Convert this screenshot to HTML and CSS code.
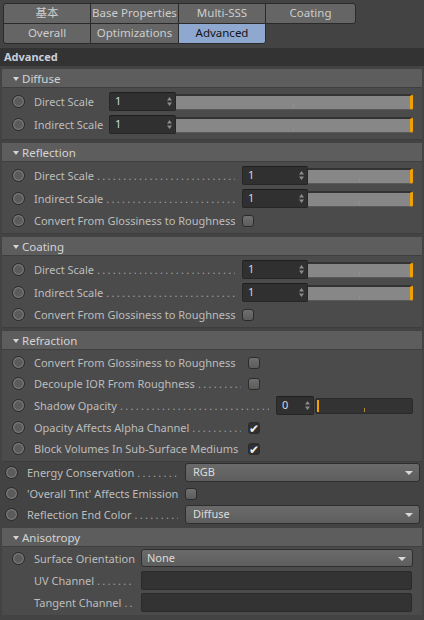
FILE: index.html
```html
<!DOCTYPE html>
<html>
<head>
<meta charset="utf-8">
<link rel="stylesheet" href="styles.css">
</head>
<body>
<div class="tabs">
  <div class="tab tl">基本</div>
  <div class="tab">Base Properties</div>
  <div class="tab">Multi-SSS</div>
  <div class="tab tr br">Coating</div>
  <div class="tab bl">Overall</div>
  <div class="tab">Optimizations</div>
  <div class="tab active br">Advanced</div>
</div>
<div class="title">Advanced</div>

<div class="group first">
  <div class="ghead"><span class="tri"></span>Diffuse</div>
  <div class="gbody">
    <div class="row"><span class="radio"></span><span class="label w75"><span>Direct Scale</span></span>
      <div class="num w67">1<svg class="spin" width="5" height="9" viewBox="0 0 5 9"><path d="M0 3.5L2.5 0L5 3.5Z M0 5.5L2.5 9L5 5.5Z" fill="#8c8c8c"/></svg></div><div class="slider"><i class="tick"></i></div></div>
    <div class="row"><span class="radio"></span><span class="label w75"><span>Indirect Scale</span></span>
      <div class="num w67">1<svg class="spin" width="5" height="9" viewBox="0 0 5 9"><path d="M0 3.5L2.5 0L5 3.5Z M0 5.5L2.5 9L5 5.5Z" fill="#8c8c8c"/></svg></div><div class="slider"><i class="tick"></i></div></div>
  </div>
</div>

<div class="group">
  <div class="ghead"><span class="tri"></span>Reflection</div>
  <div class="gbody">
    <div class="row"><span class="radio"></span><span class="label w208"><span>Direct Scale</span><span class="dots">........................................</span></span>
      <div class="num w66">1<svg class="spin" width="5" height="9" viewBox="0 0 5 9"><path d="M0 3.5L2.5 0L5 3.5Z M0 5.5L2.5 9L5 5.5Z" fill="#8c8c8c"/></svg></div><div class="slider"><i class="tick"></i></div></div>
    <div class="row"><span class="radio"></span><span class="label w208"><span>Indirect Scale</span><span class="dots">........................................</span></span>
      <div class="num w66">1<svg class="spin" width="5" height="9" viewBox="0 0 5 9"><path d="M0 3.5L2.5 0L5 3.5Z M0 5.5L2.5 9L5 5.5Z" fill="#8c8c8c"/></svg></div><div class="slider"><i class="tick"></i></div></div>
    <div class="row c"><span class="radio"></span><span class="label w208"><span>Convert From Glossiness to Roughness</span></span><span class="check"></span></div>
  </div>
</div>

<div class="group">
  <div class="ghead"><span class="tri"></span>Coating</div>
  <div class="gbody">
    <div class="row"><span class="radio"></span><span class="label w208"><span>Direct Scale</span><span class="dots">........................................</span></span>
      <div class="num w66">1<svg class="spin" width="5" height="9" viewBox="0 0 5 9"><path d="M0 3.5L2.5 0L5 3.5Z M0 5.5L2.5 9L5 5.5Z" fill="#8c8c8c"/></svg></div><div class="slider"><i class="tick"></i></div></div>
    <div class="row"><span class="radio"></span><span class="label w208"><span>Indirect Scale</span><span class="dots">........................................</span></span>
      <div class="num w66">1<svg class="spin" width="5" height="9" viewBox="0 0 5 9"><path d="M0 3.5L2.5 0L5 3.5Z M0 5.5L2.5 9L5 5.5Z" fill="#8c8c8c"/></svg></div><div class="slider"><i class="tick"></i></div></div>
    <div class="row c"><span class="radio"></span><span class="label w208"><span>Convert From Glossiness to Roughness</span></span><span class="check"></span></div>
  </div>
</div>

<div class="group">
  <div class="ghead"><span class="tri"></span>Refraction</div>
  <div class="gbody">
    <div class="row c"><span class="radio"></span><span class="label w214"><span>Convert From Glossiness to Roughness</span></span><span class="check"></span></div>
    <div class="row c"><span class="radio"></span><span class="label w214"><span>Decouple IOR From Roughness</span><span class="dots">........................................</span></span><span class="check"></span></div>
    <div class="row"><span class="radio"></span><span class="label w242"><span>Shadow Opacity</span><span class="dots">........................................</span></span>
      <div class="num w38">0<svg class="spin" width="5" height="9" viewBox="0 0 5 9"><path d="M0 3.5L2.5 0L5 3.5Z M0 5.5L2.5 9L5 5.5Z" fill="#8c8c8c"/></svg></div><div class="slider dark"><i class="bar"></i><i class="tick"></i></div></div>
    <div class="row c"><span class="radio"></span><span class="label w214"><span>Opacity Affects Alpha Channel</span><span class="dots">........................................</span></span><span class="check on">✔</span></div>
    <div class="row c"><span class="radio"></span><span class="label w214"><span>Block Volumes In Sub-Surface Mediums</span></span><span class="check on">✔</span></div>
  </div>
</div>

<div class="top">
  <div class="row"><span class="radio"></span><span class="label w158"><span>Energy Conservation</span><span class="dots">........................................</span></span>
    <div class="select">RGB<span class="arrow"></span></div></div>
  <div class="row"><span class="radio"></span><span class="label w158 tight"><span>'Overall Tint' Affects Emission</span></span><span class="check"></span></div>
  <div class="row"><span class="radio"></span><span class="label w158"><span>Reflection End Color</span><span class="dots">........................................</span></span>
    <div class="select">Diffuse<span class="arrow"></span></div></div>
</div>

<div class="group last">
  <div class="ghead"><span class="tri"></span>Anisotropy</div>
  <div class="gbody">
    <div class="row"><span class="radio"></span><span class="label w107"><span>Surface Orientation</span></span>
      <div class="select s2">None<span class="arrow"></span></div></div>
    <div class="row noradio"><span class="label w107"><span>UV Channel</span><span class="dots">........................................</span></span>
      <div class="field"></div></div>
    <div class="row noradio"><span class="label w107"><span>Tangent Channel</span><span class="dots">........................................</span></span>
      <div class="field"></div></div>
  </div>
</div>
</body>
</html>
```

FILE: styles.css
```css
* { box-sizing: border-box; }
html, body { margin: 0; padding: 0; }
body {
  width: 424px;
  height: 620px;
  overflow: hidden;
  background: #434343;
  font-family: "Noto Sans", "Open Sans", "Noto Sans CJK SC", sans-serif;
  font-size: 11px;
  color: #bcbcbc;
}

/* tabs */
.tabs {
  display: grid;
  grid-template-columns: 87px 88px 87px 90px;
  grid-auto-rows: 20px;
  margin: 3px 0 0 3px;
  width: 352px;
}
.tab {
  border: 1px solid #2a2a2a;
  margin: 0 -1px -1px 0;
  background: #656565;
  color: #cdcdcd;
  text-align: center;
  line-height: 17px;
  font-size: 11.5px;
  white-space: nowrap;
}
.tab.tl { border-top-left-radius: 3px; }
.tab.tr { border-top-right-radius: 3px; }
.tab.br { border-bottom-right-radius: 3px; }
.tab.bl { border-bottom-left-radius: 3px; }
.tab.active { background: #8fa8cf; color: #141414; }

.title {
  margin-top: 5px;
  height: 18px;
  line-height: 18px;
  background: #333333;
  color: #c9cfdb;
  font-weight: bold;
  padding-left: 4px;
}

/* groups */
.group {
  margin: 3px 2px 0 2px;
  background: #4b4b4b;
  border-bottom: 1px solid #3d3d3d;
}
.group.last { border-bottom: 0; }
.ghead {
  height: 19px;
  background: #5d5d5d;
  border-bottom: 1px solid #3f3f3f;
  color: #d4d4d4;
  display: flex;
  align-items: center;
  padding-left: 11px;
  font-size: 11.5px;
}
.tri {
  width: 0; height: 0;
  border-left: 3px solid transparent;
  border-right: 3px solid transparent;
  border-top: 4px solid #d4d4d4;
  margin-right: 3px;
  margin-top: 1px;
}
.gbody { padding: 2px 9px 2px 10px; }
.group.first .gbody { padding-bottom: 3px; }
.group.last .gbody { padding-top: 0; }
.group.last .row { height: 22px; }

.row {
  display: flex;
  align-items: center;
  height: 23px;
}
.row.c { height: 21px; }
.row.noradio { padding-left: 22px; }

.radio {
  flex: none;
  width: 13px;
  height: 13px;
  border-radius: 50%;
  border: 1px solid #2a2a2a;
  background: radial-gradient(circle, #5b5b5b 0 48%, #7a7a7a 60%, #6a6a6a 78%, #3e3e3e 100%);
  margin-right: 9px;
}

.label {
  flex: none;
  display: flex;
  white-space: nowrap;
  overflow: hidden;
  padding-right: 7px;
  color: #bdbdbd;
}
.label.tight { padding-right: 2px; }
.label > span:first-child { flex: none; }
.dots {
  flex: 1;
  overflow: hidden;
  letter-spacing: 2.3px;
  margin-left: 3px;
  color: #a0a0a0;
}
.w75 { width: 75px; }
.w107 { width: 107px; }
.w158 { width: 158px; }
.w208 { width: 208px; }
.w214 { width: 214px; }
.w242 { width: 242px; }

.num {
  flex: none;
  position: relative;
  height: 19px;
  background: #303030;
  border: 1px solid #262626;
  border-top-color: #1e1e1e;
  border-radius: 2px;
  color: #cfd8e2;
  line-height: 16px;
  padding-left: 5px;
}
.w67 { width: 67px; }
.w66 { width: 66px; }
.w38 { width: 38px; }
.spin {
  position: absolute;
  right: 3px;
  top: 4px;
}

.slider {
  flex: 1;
  position: relative;
  height: 16px;
  background: #878787;
  border-top: 2px solid #333;
  border-bottom: 1px solid #5a5a5a;
  border-right: 3px solid #f0a000;
  border-radius: 0 2px 2px 0;
}
.slider .tick {
  position: absolute;
  left: 50%;
  bottom: 1px;
  width: 1px;
  height: 4px;
  background: #b88a3a;
}
.slider.dark {
  background: #333333;
  border: 1px solid #2a2a2a;
  border-radius: 2px;
  margin-left: 1px;
}
.slider.dark .bar {
  position: absolute;
  left: 1px; top: 1px; bottom: 1px;
  width: 2px;
  background: #f0a000;
}

.check {
  flex: none;
  width: 12px;
  height: 12px;
  border-radius: 3px;
  border: 1px solid #2c2c2c;
  background: linear-gradient(#707070, #5c5c5c);
  color: #f0f0f0;
  font-size: 12px;
  line-height: 11px;
  text-align: center;
  overflow: visible;
}
.check.on { background: #303030; }

/* top-level rows */
.top { padding: 0 4px 0 5px; }
.top .row { height: 21px; }
.top .radio { margin-right: 9px; }

.select {
  flex: 1;
  position: relative;
  height: 19px;
  background: linear-gradient(#6a6a6a, #5e5e5e);
  border: 1px solid #2e2e2e;
  border-radius: 3px;
  color: #dcdcdc;
  line-height: 16px;
  padding-left: 7px;
}
.select.s2 { padding-left: 5px; height: 18px; }
.arrow {
  position: absolute;
  right: 6px;
  top: 7px;
  width: 0; height: 0;
  border-left: 4px solid transparent;
  border-right: 4px solid transparent;
  border-top: 4px solid #d8d8d8;
}
.field {
  flex: 1;
  height: 19px;
  background: #333;
  border: 1px solid #2a2a2a;
  border-radius: 2px;
  margin-right: 1px;
}
```
